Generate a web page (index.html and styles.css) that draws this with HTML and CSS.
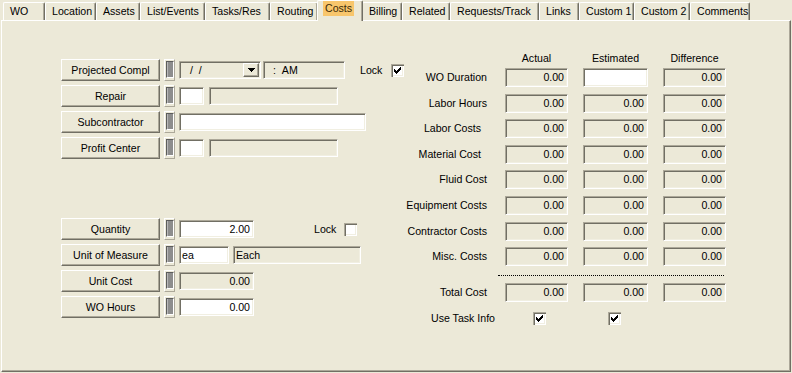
FILE: index.html
```html
<!DOCTYPE html>
<html>
<head>
<meta charset="utf-8">
<link rel="stylesheet" href="styles.css">
</head>
<body>
<div class="win">
  <div class="tabs">
    <div class="tab">WO</div>
    <div class="tab">Location</div>
    <div class="tab">Assets</div>
    <div class="tab">List/Events</div>
    <div class="tab">Tasks/Res</div>
    <div class="tab">Routing</div>
    <div class="tab on"><span class="hl">Costs</span></div>
    <div class="tab">Billing</div>
    <div class="tab">Related</div>
    <div class="tab">Requests/Track</div>
    <div class="tab">Links</div>
    <div class="tab">Custom 1</div>
    <div class="tab">Custom 2</div>
    <div class="tab">Comments</div>
  </div>
  <div class="panel">
    <div class="left">
      <div class="group">
        <div class="row">
          <button class="btn">Projected Compl</button><span class="grip"></span>
          <div class="fld combo"><span class="date">/&nbsp;&nbsp;/</span><span class="dd"><svg width="7" height="4" viewBox="0 0 7 4"><path d="M0 0h7v1H0zM1 1h5v1H1zM2 2h3v1H2zM3 3h1v1H3z" fill="#000"/></svg></span></div>
          <div class="fld time">:&nbsp;&nbsp;AM</div>
          <span class="lock lock1">Lock</span>
          <span class="chk"><svg width="13" height="13" viewBox="0 0 13 13"><path d="M3 5h1v3H3zM4 6h1v3H4zM5 7h1v3H5zM6 6h1v3H6zM7 5h1v3H7zM8 4h1v3H8zM9 3h1v3H9z" fill="#000"/></svg></span>
        </div>
        <div class="row">
          <button class="btn">Repair</button><span class="grip"></span>
          <div class="fld white code"></div>
          <div class="fld desc"></div>
        </div>
        <div class="row">
          <button class="btn">Subcontractor</button><span class="grip"></span>
          <div class="fld white sub"></div>
        </div>
        <div class="row">
          <button class="btn">Profit Center</button><span class="grip"></span>
          <div class="fld white code"></div>
          <div class="fld desc"></div>
        </div>
      </div>
      <div class="group group2">
        <div class="row">
          <button class="btn">Quantity</button><span class="grip"></span>
          <div class="fld white num qty">2.00</div>
          <span class="lock lock2">Lock</span>
          <span class="chk"></span>
        </div>
        <div class="row">
          <button class="btn">Unit of Measure</button><span class="grip"></span>
          <div class="fld white uom">ea</div>
          <div class="fld uomd">Each</div>
        </div>
        <div class="row">
          <button class="btn">Unit Cost</button><span class="grip"></span>
          <div class="fld num qty">0.00</div>
        </div>
        <div class="row">
          <button class="btn">WO Hours</button><span class="grip"></span>
          <div class="fld white num qty">0.00</div>
        </div>
      </div>
    </div>
    <div class="costs">
      <div class="cols chead">
        <span></span><span>Actual</span><span>Estimated</span><span>Difference</span>
      </div>
      <div class="cols crows">
        <span class="lbl">WO Duration</span><div class="fld num">0.00</div><div class="fld white"></div><div class="fld num">0.00</div>
        <span class="lbl">Labor Hours</span><div class="fld num">0.00</div><div class="fld num">0.00</div><div class="fld num">0.00</div>
        <span class="lbl in">Labor Costs</span><div class="fld num">0.00</div><div class="fld num">0.00</div><div class="fld num">0.00</div>
        <span class="lbl in">Material Cost</span><div class="fld num">0.00</div><div class="fld num">0.00</div><div class="fld num">0.00</div>
        <span class="lbl">Fluid Cost</span><div class="fld num">0.00</div><div class="fld num">0.00</div><div class="fld num">0.00</div>
        <span class="lbl">Equipment Costs</span><div class="fld num">0.00</div><div class="fld num">0.00</div><div class="fld num">0.00</div>
        <span class="lbl">Contractor Costs</span><div class="fld num">0.00</div><div class="fld num">0.00</div><div class="fld num">0.00</div>
        <span class="lbl">Misc. Costs</span><div class="fld num">0.00</div><div class="fld num">0.00</div><div class="fld num">0.00</div>
      </div>
      <div class="dots"></div>
      <div class="cols ctotal">
        <span class="lbl">Total Cost</span><div class="fld num">0.00</div><div class="fld num">0.00</div><div class="fld num">0.00</div>
      </div>
      <div class="cols ctask">
        <span class="lbl wide">Use Task Info</span>
        <span class="chk c1"><svg width="13" height="13" viewBox="0 0 13 13"><path d="M3 5h1v3H3zM4 6h1v3H4zM5 7h1v3H5zM6 6h1v3H6zM7 5h1v3H7zM8 4h1v3H8zM9 3h1v3H9z" fill="#000"/></svg></span>
        <span class="chk c2"><svg width="13" height="13" viewBox="0 0 13 13"><path d="M3 5h1v3H3zM4 6h1v3H4zM5 7h1v3H5zM6 6h1v3H6zM7 5h1v3H7zM8 4h1v3H8zM9 3h1v3H9z" fill="#000"/></svg></span>
        <span></span>
      </div>
    </div>
  </div>
</div>
</body>
</html>
```
FILE: styles.css
```css
* { box-sizing: border-box; }
body {
  margin: 0;
  background: #ECE9D8;
  font: 10.6px "Liberation Sans", Arial, sans-serif;
  color: #000;
}
.win { width: 792px; height: 373px; }

/* tabs */
.tabs {
  display: grid;
  grid-template-columns: 42px 51px 44px 65px 65px 48px 44px 40px 48px 89px 40px 55px 56px 60px;
  padding-left: 3px;
  height: 20px;
  align-items: end;
}
.tab {
  height: 18px;
  line-height: 17px;
  padding-left: 6px;
  border-top: 1px solid #fff;
  border-left: 1px solid #fff;
  border-right: 1px solid #716f64;
  box-shadow: inset -1px 0 #aca899;
  border-radius: 2px 2px 0 0;
  white-space: nowrap;
  background: #ECE9D8;
}
.tab.on {
  height: 21px;
  margin: 0 -1px -1px -1px;
  padding-left: 5px;
  position: relative;
  z-index: 1;
  line-height: 15px;
}
.hl {
  display: inline-block;
  background: #F8C66C;
  padding: 0 2px;
  height: 15px;
  color: #3a2a08;
}

/* panel */
.panel {
  margin-left: 1px;
  width: 790px;
  height: 352px;
  border: 1px solid;
  border-color: #fff #716f64 #716f64 #fff;
  box-shadow: inset -1px -1px #aca899;
  display: flex;
}
.left {
  width: 399px;
  flex: none;
  padding: 38px 0 0 59px;
}
.group { display: flex; flex-direction: column; gap: 4px; }
.group2 { margin-top: 59px; }
.row { display: flex; align-items: center; height: 22px; }

.btn {
  width: 99px;
  height: 22px;
  font: inherit;
  color: #000;
  background: #ECE9D8;
  border: 1px solid;
  border-color: #fff #716f64 #716f64 #fff;
  box-shadow: inset -1px -1px #aca899;
  padding: 0;
  margin: 0 4px 0 0;
  flex: none;
}
.grip {
  width: 11px;
  height: 22px;
  margin-right: 4px;
  border: 1px solid;
  border-color: #fff #aca899 #aca899 #fff;
  display: flex;
  justify-content: center;
  padding: 1px 0 2px;
  flex: none;
}
.grip::before {
  content: "";
  width: 6px;
  background: #8d8d8d;
  border-left: 1px solid #5c5c5c;
  border-top: 1px solid #5c5c5c;
  border-right: 1px solid #fff;
  border-bottom: 1px solid #fff;
  box-shadow: inset 1px 0 #b8b8b8;
}

.fld {
  height: 18px;
  border: 1px solid;
  border-color: #aca899 #fff #fff #aca899;
  box-shadow: inset 1px 1px #716f64, inset -1px -1px #f1efe2;
  background: #ECE9D8;
  padding: 0 3px;
  line-height: 16px;
  white-space: nowrap;
  flex: none;
}
.fld.white { background: #fff; }
.num { text-align: right; }

.combo {
  width: 82px;
  display: flex;
  align-items: center;
  padding: 1px 1px 1px 10px;
}
.date { flex: 1; }
.dd {
  width: 16px;
  height: 14px;
  border: 1px solid;
  border-color: #fff #716f64 #716f64 #fff;
  box-shadow: inset -1px -1px #aca899;
  background: #ECE9D8;
  display: flex;
  align-items: center;
  justify-content: center;
}
.dd svg { display: block; }
.time { width: 82px; margin-left: 2px; padding-left: 9px; }
.lock1 { margin-left: 15px; margin-right: 9px; }
.lock2 { margin-left: 60px; margin-right: 8px; }

.code { width: 25px; }
.desc { width: 129px; margin-left: 5px; }
.sub { width: 187px; }
.qty { width: 75px; }
.uom { width: 50px; padding-left: 2px; }
.uomd { width: 128px; margin-left: 4px; padding-left: 2px; }

.chk {
  width: 13px;
  height: 13px;
  background: #fff;
  box-shadow: inset 1px 1px #aca899, inset 2px 2px #716f64, inset -1px -1px #fff, inset -2px -2px #f1efe2;
  flex: none;
  display: block;
}
.chk svg { display: block; }

/* costs */
.costs { padding-top: 31px; width: 340px; }
.cols {
  display: grid;
  grid-template-columns: 89px 63px 65px 63px;
  column-gap: 15px;
}
.chead { height: 16px; line-height: 12px; text-align: center; }
.crows {
  grid-auto-rows: 19px;
  row-gap: 6.6px;
  align-items: center;
}
.crows .fld, .ctotal .fld { height: 19px; line-height: 17px; }
.lbl {
  text-align: right;
  padding-right: 3px;
  white-space: nowrap;
  line-height: 19px;
}
.lbl.in { padding-right: 9px; }
.lbl.wide { padding-right: 0; margin-right: -5px; line-height: 13px; }
.dots {
  margin: 9px 0 0 97px;
  width: 226px;
  border-top: 1px dotted #000;
}
.ctotal { margin-top: 7px; height: 19px; }
.ctask { margin-top: 10px; align-items: center; }
.c1 { margin-left: 28px; }
.c2 { margin-left: 25px; }
```
